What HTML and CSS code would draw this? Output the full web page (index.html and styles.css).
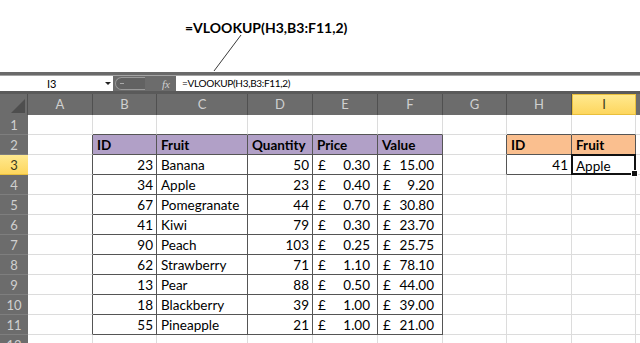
FILE: index.html
```html
<!DOCTYPE html>
<html>
<head>
<meta charset="utf-8">
<link rel="stylesheet" href="styles.css">
</head>
<body>
<div class="annot">
  <div class="annot-text">=VLOOKUP(H3,B3:F11,2)</div>
  <svg class="annot-line" width="640" height="72" viewBox="0 0 640 72"><line x1="241" y1="35" x2="214" y2="71" stroke="#3a3a3a" stroke-width="1"/></svg>
</div>
<div class="band"></div>
<div class="fbar">
  <div class="namebox"><span class="nb-text">I3</span><span class="nb-arrow"></span></div>
  <div class="fxzone"><span class="pill"><span class="pill-dash"></span></span><span class="fx">fx</span></div>
  <div class="input">=VLOOKUP(H3,B3:F11,2)</div>
</div>
<div class="gap"></div>
<div class="grid">
  <div class="corner"></div><div class="ch">A</div><div class="ch">B</div><div class="ch">C</div><div class="ch">D</div><div class="ch">E</div><div class="ch">F</div><div class="ch">G</div><div class="ch">H</div><div class="ch sel">I</div><div class="ch"></div>

  <div class="rh">1</div><div class="c"></div><div class="c tt"></div><div class="c tt"></div><div class="c tt"></div><div class="c tt"></div><div class="c tt"></div><div class="c"></div><div class="c tt"></div><div class="c tt"></div><div class="c"></div>

  <div class="rh">2</div><div class="c tl"></div><div class="c t pu b">ID</div><div class="c t pu b">Fruit</div><div class="c t pu b">Quantity</div><div class="c t pu b">Price</div><div class="c t pu b">Value</div><div class="c tl"></div><div class="c t or b">ID</div><div class="c t or b">Fruit</div><div class="c"></div>

  <div class="rh rsel">3</div><div class="c tl"></div><div class="c t r">23</div><div class="c t">Banana</div><div class="c t r">50</div><div class="c t acc"><span>£</span><span>0.30</span></div><div class="c t acc af"><span>£</span><span>15.00</span></div><div class="c tl"></div><div class="c t r">41</div><div class="c cur">Apple</div><div class="c"></div>

  <div class="rh">4</div><div class="c tl"></div><div class="c t r">34</div><div class="c t">Apple</div><div class="c t r">23</div><div class="c t acc"><span>£</span><span>0.40</span></div><div class="c t acc af"><span>£</span><span>9.20</span></div><div class="c"></div><div class="c"></div><div class="c"></div><div class="c"></div>

  <div class="rh">5</div><div class="c tl"></div><div class="c t r">67</div><div class="c t">Pomegranate</div><div class="c t r">44</div><div class="c t acc"><span>£</span><span>0.70</span></div><div class="c t acc af"><span>£</span><span>30.80</span></div><div class="c"></div><div class="c"></div><div class="c"></div><div class="c"></div>

  <div class="rh">6</div><div class="c tl"></div><div class="c t r">41</div><div class="c t">Kiwi</div><div class="c t r">79</div><div class="c t acc"><span>£</span><span>0.30</span></div><div class="c t acc af"><span>£</span><span>23.70</span></div><div class="c"></div><div class="c"></div><div class="c"></div><div class="c"></div>

  <div class="rh">7</div><div class="c tl"></div><div class="c t r">90</div><div class="c t">Peach</div><div class="c t r">103</div><div class="c t acc"><span>£</span><span>0.25</span></div><div class="c t acc af"><span>£</span><span>25.75</span></div><div class="c"></div><div class="c"></div><div class="c"></div><div class="c"></div>

  <div class="rh">8</div><div class="c tl"></div><div class="c t r">62</div><div class="c t">Strawberry</div><div class="c t r">71</div><div class="c t acc"><span>£</span><span>1.10</span></div><div class="c t acc af"><span>£</span><span>78.10</span></div><div class="c"></div><div class="c"></div><div class="c"></div><div class="c"></div>

  <div class="rh">9</div><div class="c tl"></div><div class="c t r">13</div><div class="c t">Pear</div><div class="c t r">88</div><div class="c t acc"><span>£</span><span>0.50</span></div><div class="c t acc af"><span>£</span><span>44.00</span></div><div class="c"></div><div class="c"></div><div class="c"></div><div class="c"></div>

  <div class="rh">10</div><div class="c tl"></div><div class="c t r">18</div><div class="c t">Blackberry</div><div class="c t r">39</div><div class="c t acc"><span>£</span><span>1.00</span></div><div class="c t acc af"><span>£</span><span>39.00</span></div><div class="c"></div><div class="c"></div><div class="c"></div><div class="c"></div>

  <div class="rh">11</div><div class="c tl"></div><div class="c t r">55</div><div class="c t">Pineapple</div><div class="c t r">21</div><div class="c t acc"><span>£</span><span>1.00</span></div><div class="c t acc af"><span>£</span><span>21.00</span></div><div class="c"></div><div class="c"></div><div class="c"></div><div class="c"></div>

  <div class="rh">12</div><div class="c"></div><div class="c"></div><div class="c"></div><div class="c"></div><div class="c"></div><div class="c"></div><div class="c"></div><div class="c"></div><div class="c"></div><div class="c"></div>
</div>
</body>
</html>
```

FILE: styles.css
```css
* { box-sizing: border-box; }
html, body { margin: 0; padding: 0; }
body {
  width: 640px;
  height: 343px;
  overflow: hidden;
  background: #fff;
  font-family: Lato, "Open Sans", sans-serif;
  color: #000;
}

.annot { position: relative; height: 72px; }
.annot-text {
  padding: 20px 0 0 185px;
  font-weight: 700;
  font-size: 14px;
  line-height: 16px;
}
.annot-line { position: absolute; left: 0; top: 0; }

.band { height: 4px; border-top: 3px solid #6a6a6a; background: #a4a4a4; }

.fbar { display: flex; height: 15px; }
.namebox {
  width: 113px;
  background: #fff;
  position: relative;
  font-size: 11px;
  line-height: 15px;
}
.nb-text { padding-left: 47px; }
.nb-arrow {
  position: absolute;
  left: 105px;
  top: 6px;
  width: 0; height: 0;
  border-left: 3px solid transparent;
  border-right: 3px solid transparent;
  border-top: 3px solid #222;
}
.fxzone {
  width: 63px;
  background: #6c6c6c;
  display: flex;
  align-items: center;
  padding-left: 2px;
}
.pill {
  width: 30px;
  height: 13px;
  border: 1px solid #9a9a9a;
  border-right: none;
  border-radius: 7px 0 0 7px;
  background: #626262;
  display: flex;
  align-items: center;
  padding-left: 4px;
}
.pill-dash { width: 4px; height: 1px; background: #a8a8a8; }
.fx {
  margin-left: 17px;
  font-family: "Liberation Serif", serif;
  font-style: italic;
  font-size: 11px;
  color: #d0d0d0;
}
.input {
  flex: 1;
  background: #fff;
  padding-left: 6px;
  font-size: 10px;
  letter-spacing: -0.3px;
  line-height: 15px;
}

.gap { height: 3px; background: #5a5a5a; }

.grid {
  display: grid;
  grid-template-columns: 28px 65px 64px 91px 65px 65px 65px 64px 65px 64px 1fr;
  grid-template-rows: 21px;
  grid-auto-rows: 20px;
  height: 249px;
  overflow: hidden;
  font-size: 13.5px;
}

.corner {
  background: #6c6c6c;
  border-right: 1px solid #505050;
  position: relative;
}
.corner::after {
  content: "";
  position: absolute;
  right: 2px;
  bottom: 2px;
  width: 0; height: 0;
  border-left: 14px solid transparent;
  border-bottom: 14px solid #4e4e4e;
}
.ch {
  background: #6c6c6c;
  color: #d0d0d0;
  border-right: 1px solid #505050;
  text-align: center;
  font-size: 13px;
  line-height: 21px;
}
.ch.sel {
  background: linear-gradient(#ffe98f, #fdd65e);
  color: #3a3a20;
  border: 1px solid #e9bf3c;
  line-height: 19px;
}
.rh {
  background: #6c6c6c;
  color: #d0d0d0;
  border-bottom: 1px solid #7e7e7e;
  text-align: center;
  font-size: 13px;
  line-height: 20px;
}
.rh.rsel {
  background: linear-gradient(#ffe98f, #fdd65e);
  color: #3a3a20;
  border-bottom-color: #e9bf3c;
}

.c {
  border-right: 1px solid #dcdcdc;
  border-bottom: 1px solid #dcdcdc;
  padding: 1px 3px 0 4px;
  line-height: 19px;
  white-space: nowrap;
  overflow: hidden;
}
.c.t { border-right-color: #555; border-bottom-color: #555; }
.c.tl { border-right-color: #555; }
.c.tt { border-bottom-color: #555; }
.r { text-align: right; }
.b { font-weight: 700; }
.pu { background: #b1a0c7; }
.or { background: #fabf8f; }
.acc { display: flex; justify-content: space-between; padding-left: 5px; padding-right: 7px; }
.acc.af { padding-right: 8px; }
.cur {
  position: relative;
  overflow: visible;
  border: 2px solid #111;
  margin: -1px 0 0 -1px;
  padding-left: 3px;
  line-height: 18px;
}
.cur::after {
  content: "";
  position: absolute;
  right: -4px;
  bottom: -4px;
  width: 5px;
  height: 5px;
  background: #111;
  border: 1px solid #fff;
}
```
